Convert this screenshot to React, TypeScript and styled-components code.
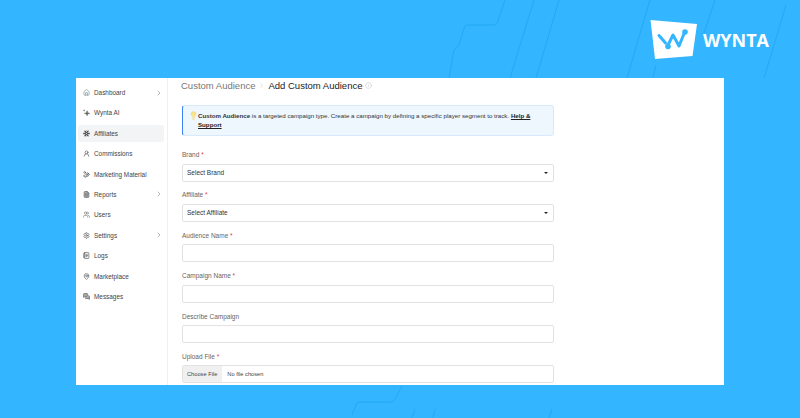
import React from 'react';
import styled, { createGlobalStyle } from 'styled-components';
import {
  ChevronRight,
  FileText,
  HandCoins,
  Home,
  Info,
  Lightbulb,
  MapPin,
  MessagesSquare,
  NotebookText,
  Settings,
  Snowflake,
  UserRound,
  Users,
} from 'lucide-react';

const GlobalStyle = createGlobalStyle`
  html, body {
    margin: 0;
    padding: 0;
    background: #33b5ff;
    font-family: "Liberation Sans", Arial, sans-serif;
  }
`;

const SparkIcon = () => (
  <svg viewBox="0 0 24 24" fill="none" stroke="currentColor" strokeWidth="2">
    <path d="M14 6L16 13L23 15L16 17L14 23L12 17L5 15L12 13Z" fill="currentColor" />
    <path d="M4 2V8M1 5H7" />
  </svg>
);

const menuItems = [
  { label: 'Dashboard', icon: <Home strokeWidth={2.5} color="#7f9a9c" />, arrow: true },
  { label: 'Wynta AI', icon: <SparkIcon /> },
  { label: 'Affiliates', icon: <Snowflake strokeWidth={2.8} color="#444" />, active: true },
  { label: 'Commissions', icon: <UserRound strokeWidth={2.5} /> },
  { label: 'Marketing Material', icon: <HandCoins strokeWidth={2.5} /> },
  { label: 'Reports', icon: <FileText strokeWidth={2.5} fill="#bbb" />, arrow: true },
  { label: 'Users', icon: <Users strokeWidth={2} /> },
  { label: 'Settings', icon: <Settings strokeWidth={2.5} />, arrow: true },
  { label: 'Logs', icon: <NotebookText strokeWidth={2.5} /> },
  { label: 'Marketplace', icon: <MapPin strokeWidth={2.5} /> },
  { label: 'Messages', icon: <MessagesSquare strokeWidth={2.5} fill="#aaa" /> },
];

const Background = () => (
  <BackgroundLines viewBox="0 0 800 418" fill="none" stroke="#1fa6f2" strokeWidth="0.8">
    <path d="M505 0L497.5 22Q497 25 494 25H467Q465 25 464.5 27L459 45L454 50L449 78" />
    <path d="M534 0L510 78" />
    <path d="M559 0L536 78" />
    <path d="M650 0L627 78" />
    <path d="M715 0L704 33M656 65L653 78" />
    <path d="M786 5L764 78" />
    <path d="M402 386L395 399Q394 402 391 402H360Q357 402 356.500 404L352 415" />
    <path d="M415 409L412 418M435 409L433 418M552 409L549 418" />
  </BackgroundLines>
);

const Logo = () => (
  <LogoMark viewBox="0 0 48 40">
    <path d="M0.500 0L47 4L42.500 36L5 39Z" fill="#fff" />
    <path
      d="M9 15.500L15.500 23M18.500 24L23 15L29 26L34.500 12.500"
      fill="none"
      stroke="#33b5ff"
      strokeWidth="3"
      strokeLinecap="round"
      strokeLinejoin="round"
    />
    <circle cx="18" cy="26.500" r="2.800" fill="#33b5ff" />
    <circle cx="35" cy="12" r="2.800" fill="#33b5ff" />
  </LogoMark>
);

const App = () => {
  return (
    <Page>
      <GlobalStyle />
      <Background />
      <TopBar>
        <Logo />
        <LogoText>WYNTA</LogoText>
      </TopBar>
      <Card>
        <Sidebar>
          {menuItems.map((item) => (
            <MenuItem key={item.label} $active={item.active}>
              <MenuIcon>{item.icon}</MenuIcon>
              <MenuLabel>{item.label}</MenuLabel>
              {item.arrow && <ChevronRight size={8} color="#777" strokeWidth={1.5} />}
            </MenuItem>
          ))}
        </Sidebar>
        <Main>
          <Breadcrumb>
            <CrumbParent>Custom Audience</CrumbParent>
            <ChevronRight size={7} color="#bbb" strokeWidth={1.5} />
            <CrumbCurrent>Add Custom Audience</CrumbCurrent>
            <Info size={7} color="#bbb" strokeWidth={1.5} />
          </Breadcrumb>
          <Notice>
            <NoticeIcon>
              <Lightbulb size={9} color="#f5c842" fill="#fbe58a" strokeWidth={1.5} />
            </NoticeIcon>
            <NoticeText>
              <strong>Custom Audience</strong> is a targeted campaign type. Create a campaign by
              defining a specific player segment to track. <HelpLink>Help &amp; Support</HelpLink>
            </NoticeText>
          </Notice>
          <Form>
            <Field>
              <Label>
                Brand <Required>*</Required>
              </Label>
              <SelectBox>
                Select Brand
                <Caret />
              </SelectBox>
            </Field>
            <Field>
              <Label>
                Affiliate <Required>*</Required>
              </Label>
              <SelectBox>
                Select Affiliate
                <Caret />
              </SelectBox>
            </Field>
            <Field>
              <Label>
                Audience Name <Required>*</Required>
              </Label>
              <TextInput />
            </Field>
            <Field>
              <Label>
                Campaign Name <Required>*</Required>
              </Label>
              <TextInput />
            </Field>
            <Field>
              <Label>Describe Campaign</Label>
              <TextInput />
            </Field>
            <Field>
              <Label>
                Upload File <Required>*</Required>
              </Label>
              <FileBox>
                <FileButton>Choose File</FileButton>
                <FileName>No file chosen</FileName>
              </FileBox>
            </Field>
          </Form>
        </Main>
      </Card>
    </Page>
  );
};

const Page = styled.div`
  position: relative;
  width: 800px;
  height: 418px;
  overflow: hidden;
  background: #33b5ff;
`;

const BackgroundLines = styled.svg`
  position: absolute;
  inset: 0;
  width: 800px;
  height: 418px;
`;

const TopBar = styled.header`
  position: relative;
  display: flex;
  justify-content: flex-end;
  align-items: flex-start;
  gap: 5px;
  height: 78px;
  padding: 20px 31px 0 0;
  box-sizing: border-box;
`;

const LogoMark = styled.svg`
  width: 48px;
  height: 40px;
`;

const LogoText = styled.span`
  margin-top: 10px;
  color: #fff;
  font-family: "Open Sans", sans-serif;
  font-size: 18px;
  line-height: 20px;
  font-weight: 700;
`;

const Card = styled.section`
  position: relative;
  display: flex;
  width: 648px;
  height: 307px;
  margin-left: 76px;
  overflow: hidden;
  background: #fff;
`;

const Sidebar = styled.nav`
  display: flex;
  flex-direction: column;
  gap: 3.4px;
  width: 92px;
  padding: 6px 3px 0 2px;
  box-sizing: border-box;
  border-right: 1px solid #f0f0f0;
`;

const MenuItem = styled.div<{ $active?: boolean }>`
  display: flex;
  align-items: center;
  height: 17px;
  padding: 0 1px 0 5px;
  border-radius: 3px;
  background: ${({ $active }) => ($active ? '#f3f4f6' : 'transparent')};
`;

const MenuIcon = styled.span`
  display: flex;
  width: 11px;
  color: #666;
  svg {
    width: 7px;
    height: 7px;
  }
`;

const MenuLabel = styled.span`
  flex: 1;
  color: #444;
  font-size: 6.4px;
`;

const Main = styled.main`
  flex: 1;
  padding: 0 0 0 14px;
`;

const Breadcrumb = styled.div`
  display: flex;
  align-items: center;
  gap: 3px;
  width: 372px;
  height: 14px;
  margin-left: -1px;
`;

const CrumbParent = styled.span`
  color: #777;
  font-size: 9.5px;
`;

const CrumbCurrent = styled.span`
  color: #222;
  font-size: 9.5px;
`;

const Notice = styled.div`
  display: flex;
  width: 372px;
  height: 31px;
  margin-top: 13px;
  padding: 5px 8px 0 6px;
  box-sizing: border-box;
  border: 1px solid #d8e9fb;
  border-left: 1px solid #3b82f6;
  border-radius: 3px;
  background: #eef6fe;
`;

const NoticeIcon = styled.span`
  flex: none;
  width: 9px;
  svg {
    display: block;
  }
`;

const NoticeText = styled.p`
  margin: 0;
  color: #333;
  font-size: 6.16px;
  line-height: 9.300px;
  strong {
    font-weight: 700;
  }
`;

const HelpLink = styled.a`
  color: #222;
  font-weight: 700;
  text-decoration: underline;
`;

const Form = styled.div`
  display: flex;
  flex-direction: column;
  gap: 9.900px;
  width: 372px;
  margin-top: 15px;
`;

const Field = styled.div`
  display: flex;
  flex-direction: column;
  gap: 4.500px;
`;

const Label = styled.label`
  color: #666;
  font-size: 6.5px;
  line-height: 8px;
`;

const Required = styled.span`
  color: #e53935;
`;

const SelectBox = styled.div`
  display: flex;
  align-items: center;
  justify-content: space-between;
  height: 18px;
  padding: 0 5px 0 4px;
  box-sizing: border-box;
  border: 1px solid #e2e2e2;
  border-radius: 2px;
  color: #333;
  font-size: 6.5px;
`;

const Caret = styled.span`
  width: 0;
  height: 0;
  border-top: 2px solid #222;
  border-left: 2px solid transparent;
  border-right: 2px solid transparent;
`;

const TextInput = styled.input`
  height: 18px;
  padding: 0 5px;
  box-sizing: border-box;
  border: 1px solid #e2e2e2;
  border-radius: 2px;
  outline: none;
`;

const FileBox = styled.div`
  display: flex;
  align-items: center;
  height: 18px;
  box-sizing: border-box;
  border: 1px solid #e2e2e2;
  border-radius: 2px;
  overflow: hidden;
  font-size: 5.7px;
`;

const FileButton = styled.span`
  display: flex;
  align-items: center;
  height: 100%;
  padding: 0 5px 0 4px;
  background: #f0f0f0;
  color: #444;
`;

const FileName = styled.span`
  margin-left: 5px;
  color: #444;
`;

export default App;
